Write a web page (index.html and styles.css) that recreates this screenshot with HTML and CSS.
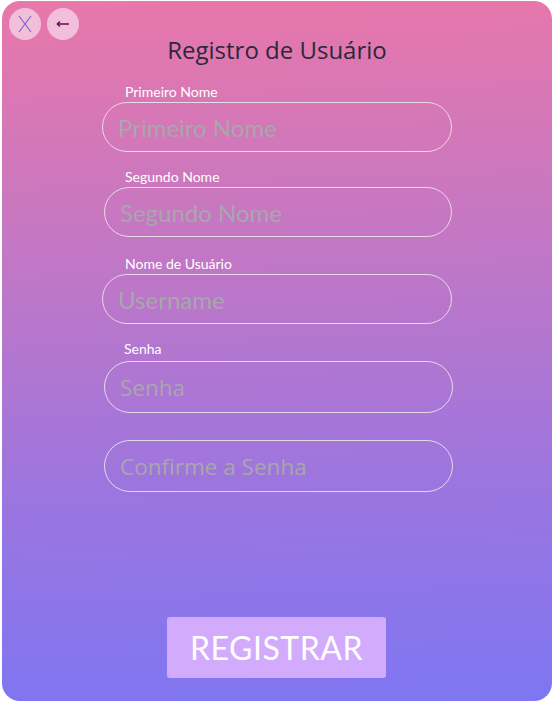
FILE: index.html
```html
<!DOCTYPE html>
<html lang="pt">
<head>
<meta charset="utf-8">
<title>Registro de Usuário</title>
<link rel="stylesheet" href="styles.css">
</head>
<body>
<div class="card">
  <div class="corner-buttons">
    <button class="circle-btn" aria-label="Fechar">
      <svg width="16" height="18" viewBox="0 0 16 18"><path d="M2 1 L14 17 M14 1 L2 17" stroke="#7d63c4" stroke-width="1.2" fill="none"/></svg>
    </button>
    <button class="circle-btn back" aria-label="Voltar">
      <svg width="14" height="8" viewBox="0 0 14 8"><path d="M1 4 H13 M1 4 L4 1.5 M1 4 L4 6.5" stroke="#5b1050" stroke-width="1.3" fill="none"/></svg>
    </button>
  </div>
  <h1 class="title">Registro de Usuário</h1>
  <form class="form">
    <div class="field">
      <label class="label">Primeiro Nome</label>
      <input class="input" placeholder="Primeiro Nome">
    </div>
    <div class="field shift1">
      <label class="label narrow">Segundo Nome</label>
      <input class="input" placeholder="Segundo Nome">
    </div>
    <div class="field gap19">
      <label class="label">Nome de Usuário</label>
      <input class="input" placeholder="Username">
    </div>
    <div class="field shift2 wide-gap">
      <label class="label narrower">Senha</label>
      <input class="input tall alt" placeholder="Senha" type="password">
    </div>
    <div class="field shift2 confirm">
      <input class="input tall alt" placeholder="Confirme a Senha" type="password">
    </div>
  </form>
  <button class="submit">REGISTRAR</button>
</div>
</body>
</html>
```
FILE: styles.css
```css
html, body {
  margin: 0;
  padding: 0;
  background: #ffffff;
}
body {
  padding: 1px 2px;
  font-family: "Lato", "Open Sans", sans-serif;
}
.card {
  position: relative;
  box-sizing: border-box;
  width: 550px;
  height: 700px;
  border-radius: 18px;
  background: linear-gradient(178deg, #e977aa 0%, #c377c4 35%, #9b75e0 70%, #7e76f2 100%);
  display: flex;
  flex-direction: column;
  align-items: center;
  padding: 34px 0 23px;
}
.corner-buttons {
  position: absolute;
  top: 7px;
  left: 7px;
  display: flex;
  gap: 6px;
}
.circle-btn {
  width: 32px;
  height: 32px;
  border-radius: 50%;
  border: none;
  background: #f2bfdb;
  padding: 0;
  display: flex;
  align-items: center;
  justify-content: center;
}
.title {
  margin: 0;
  font-family: "Open Sans", sans-serif;
  font-weight: 400;
  font-size: 24px;
  line-height: 30px;
  color: #2c2838;
}
.form {
  display: flex;
  flex-direction: column;
  width: 350px;
  gap: 17px;
  margin-top: 19px;
}
.field {
  display: flex;
  flex-direction: column;
  gap: 2px;
}
.shift1 { margin-left: 2px; }
.gap19 { margin-top: 2px; }
.shift2 { margin-left: 2px; width: 349px; }
.wide-gap { gap: 4px; }
.confirm { margin-top: 10px; }
.label {
  font-family: "Lato", sans-serif;
  font-size: 14px;
  line-height: 16px;
  color: #ffffff;
  padding-left: 23px;
}
.label.narrow { padding-left: 21px; }
.label.narrower { padding-left: 20px; }
.input {
  box-sizing: border-box;
  height: 50px;
  width: 100%;
  border-radius: 25px;
  border: 1px solid rgba(235, 235, 235, 0.85);
  background: transparent;
  padding: 0 15px;
  font-family: "Lato", sans-serif;
  font-size: 24px;
  color: #a8a8a8;
  outline: none;
}
.input.tall { height: 52px; border-radius: 26px; }
.input.alt {
  font-family: "Open Sans", sans-serif;
  font-size: 22.5px;
  padding-left: 15px;
}
.input::placeholder {
  color: #a9a6ad;
  opacity: 1;
}
.submit {
  margin-top: auto;
  width: 219px;
  height: 61px;
  border: none;
  border-radius: 3px;
  background: #d3abfd;
  color: #ffffff;
  font-family: "Lato", sans-serif;
  font-size: 32px;
  letter-spacing: 0.5px;
  padding: 0;
  margin-left: -1px;
}
```
